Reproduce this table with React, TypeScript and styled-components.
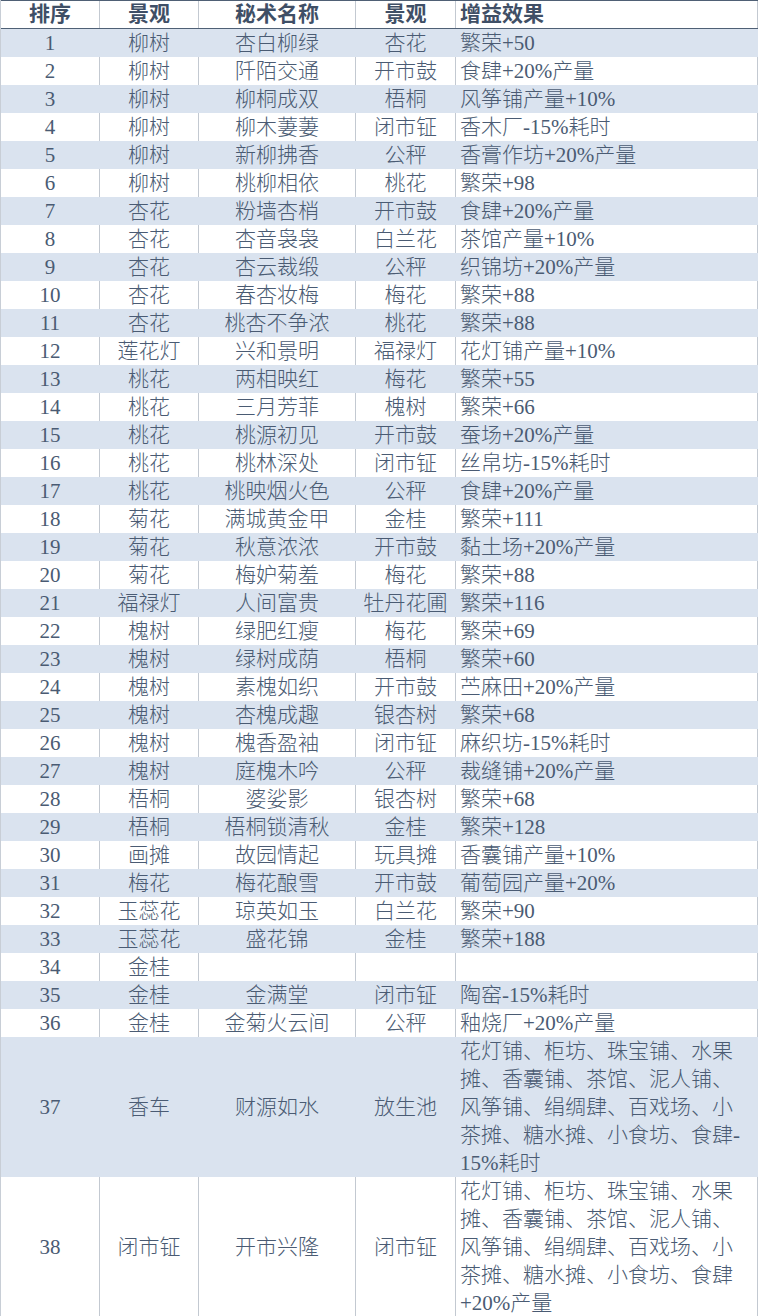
import React from "react";
import styled, { createGlobalStyle } from "styled-components";

const GlobalStyle = createGlobalStyle`
  html, body {
    margin: 0;
    padding: 0;
    background: #ffffff;
  }
`;

const Sheet = styled.div`
  width: 758px;
  font-family: "Liberation Serif", "Noto Sans CJK SC", serif;
  font-size: 21px;
  font-weight: 300;
  color: #4a5b73;
  border-left: 1px solid #c8ced6;
  box-sizing: border-box;
`;

const Row = styled.div<{ $shaded?: boolean; $head?: boolean }>`
  display: grid;
  grid-template-columns: 99px 99px 157px 100px 1fr;
  background: ${(p) => (p.$shaded ? "#dae3ef" : "#ffffff")};
  border-top: ${(p) => (p.$head ? "1px solid #4f6075" : "none")};
  border-bottom: ${(p) => (p.$head ? "1px solid #4f6075" : "none")};
  font-weight: ${(p) => (p.$head ? 700 : 300)};
  color: ${(p) => (p.$head ? "#3f4f66" : "inherit")};
`;

const Cell = styled.div<{ $shaded?: boolean; $left?: boolean }>`
  display: flex;
  align-items: center;
  justify-content: ${(p) => (p.$left ? "flex-start" : "center")};
  min-height: 28px;
  line-height: 28px;
  padding-left: ${(p) => (p.$left ? "4px" : "0")};
  border-right: 1px solid ${(p) => (p.$shaded ? "transparent" : "#c3c9d1")};
  box-sizing: border-box;
  white-space: nowrap;
`;

const HeadCell = styled(Cell)`
  min-height: 27px;
  line-height: 27px;
`;

const Lines = styled.div`
  display: flex;
  flex-direction: column;
`;

type Item = [string, string, string, string | string[]];

const shops = [
  "花灯铺、柜坊、珠宝铺、水果",
  "摊、香囊铺、茶馆、泥人铺、",
  "风筝铺、绢绸肆、百戏场、小",
];

const data: Item[] = [
  ["柳树", "杏白柳绿", "杏花", "繁荣+50"],
  ["柳树", "阡陌交通", "开市鼓", "食肆+20%产量"],
  ["柳树", "柳桐成双", "梧桐", "风筝铺产量+10%"],
  ["柳树", "柳木萋萋", "闭市钲", "香木厂-15%耗时"],
  ["柳树", "新柳拂香", "公秤", "香膏作坊+20%产量"],
  ["柳树", "桃柳相依", "桃花", "繁荣+98"],
  ["杏花", "粉墙杏梢", "开市鼓", "食肆+20%产量"],
  ["杏花", "杏音袅袅", "白兰花", "茶馆产量+10%"],
  ["杏花", "杏云裁缎", "公秤", "织锦坊+20%产量"],
  ["杏花", "春杏妆梅", "梅花", "繁荣+88"],
  ["杏花", "桃杏不争浓", "桃花", "繁荣+88"],
  ["莲花灯", "兴和景明", "福禄灯", "花灯铺产量+10%"],
  ["桃花", "两相映红", "梅花", "繁荣+55"],
  ["桃花", "三月芳菲", "槐树", "繁荣+66"],
  ["桃花", "桃源初见", "开市鼓", "蚕场+20%产量"],
  ["桃花", "桃林深处", "闭市钲", "丝帛坊-15%耗时"],
  ["桃花", "桃映烟火色", "公秤", "食肆+20%产量"],
  ["菊花", "满城黄金甲", "金桂", "繁荣+111"],
  ["菊花", "秋意浓浓", "开市鼓", "黏土场+20%产量"],
  ["菊花", "梅妒菊羞", "梅花", "繁荣+88"],
  ["福禄灯", "人间富贵", "牡丹花圃", "繁荣+116"],
  ["槐树", "绿肥红瘦", "梅花", "繁荣+69"],
  ["槐树", "绿树成荫", "梧桐", "繁荣+60"],
  ["槐树", "素槐如织", "开市鼓", "苎麻田+20%产量"],
  ["槐树", "杏槐成趣", "银杏树", "繁荣+68"],
  ["槐树", "槐香盈袖", "闭市钲", "麻织坊-15%耗时"],
  ["槐树", "庭槐木吟", "公秤", "裁缝铺+20%产量"],
  ["梧桐", "婆娑影", "银杏树", "繁荣+68"],
  ["梧桐", "梧桐锁清秋", "金桂", "繁荣+128"],
  ["画摊", "故园情起", "玩具摊", "香囊铺产量+10%"],
  ["梅花", "梅花酿雪", "开市鼓", "葡萄园产量+20%"],
  ["玉蕊花", "琼英如玉", "白兰花", "繁荣+90"],
  ["玉蕊花", "盛花锦", "金桂", "繁荣+188"],
  ["金桂", "", "", ""],
  ["金桂", "金满堂", "闭市钲", "陶窑-15%耗时"],
  ["金桂", "金菊火云间", "公秤", "釉烧厂+20%产量"],
  ["香车", "财源如水", "放生池", [...shops, "茶摊、糖水摊、小食坊、食肆-", "15%耗时"]],
  ["闭市钲", "开市兴隆", "闭市钲", [...shops, "茶摊、糖水摊、小食坊、食肆", "+20%产量"]],
];

const headers = ["排序", "景观", "秘术名称", "景观", "增益效果"];

export default function App() {
  return (
    <>
      <GlobalStyle />
      <Sheet>
        <Row $head>
          {headers.map((h, i) => (
            <HeadCell key={i} $left={i === 4}>
              {h}
            </HeadCell>
          ))}
        </Row>
        {data.map((item, i) => {
          const shaded = i % 2 === 0;
          const effect = item[3];
          return (
            <Row key={i} $shaded={shaded}>
              <Cell $shaded={shaded}>{i + 1}</Cell>
              <Cell $shaded={shaded}>{item[0]}</Cell>
              <Cell $shaded={shaded}>{item[1]}</Cell>
              <Cell $shaded={shaded}>{item[2]}</Cell>
              <Cell $shaded={shaded} $left>
                {Array.isArray(effect) ? (
                  <Lines>
                    {effect.map((l, j) => (
                      <span key={j}>{l}</span>
                    ))}
                  </Lines>
                ) : (
                  effect
                )}
              </Cell>
            </Row>
          );
        })}
      </Sheet>
    </>
  );
}
